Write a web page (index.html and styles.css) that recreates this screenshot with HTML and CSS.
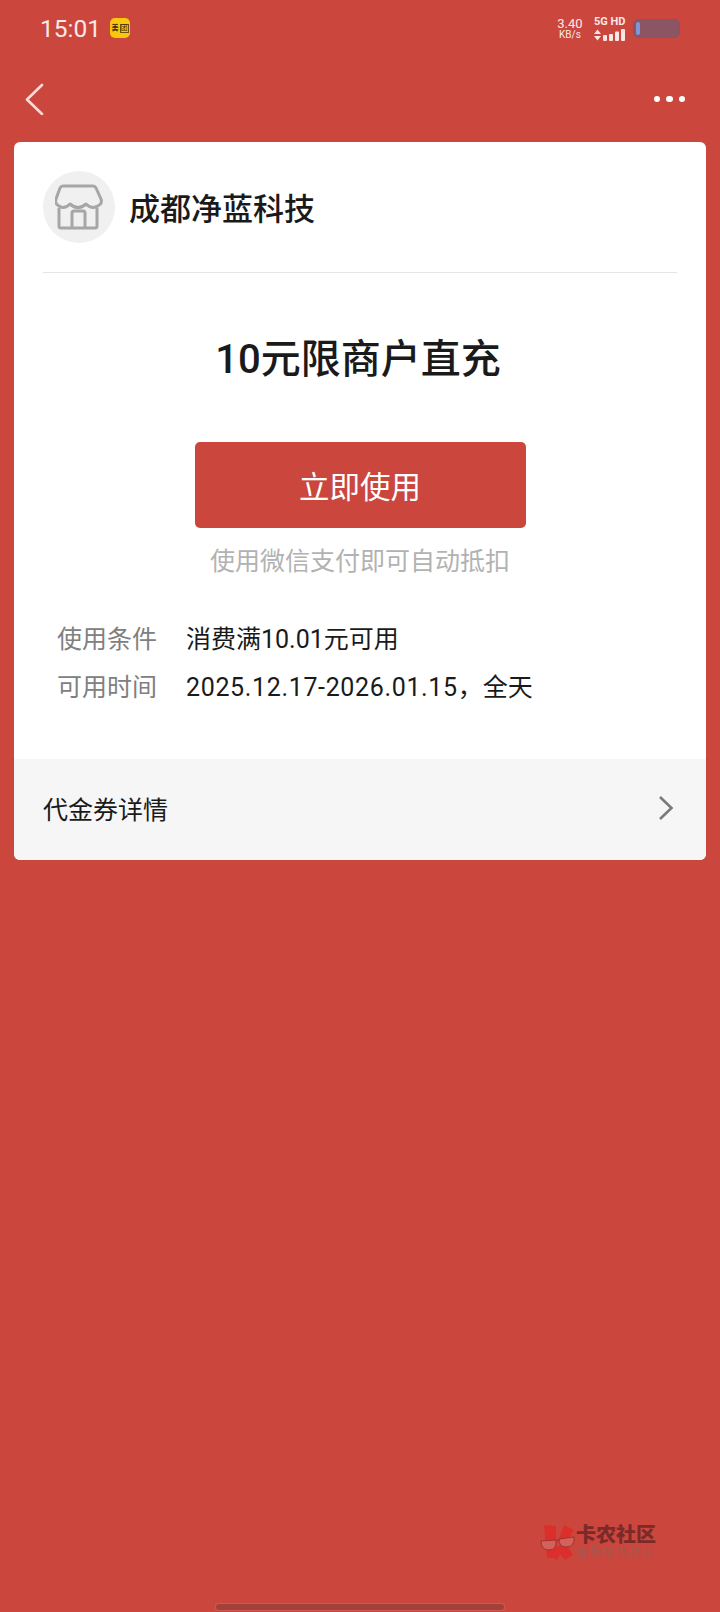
FILE: index.html
```html
<!DOCTYPE html>
<html lang="zh-CN">
<head>
  <meta charset="UTF-8">
  <meta name="viewport" content="width=device-width, initial-scale=1.0">
  <title>代金券</title>
  <link rel="stylesheet" href="styles.css">
</head>
<body>
  <!-- Phone status bar -->
  <div class="status-bar">
    <div class="status-left">
      <span class="clock">15:01</span>
      <span class="app-badge"><span>美</span><span class="app-badge-box">团</span></span>
    </div>
    <div class="status-right">
      <div class="net-speed">
        <span class="speed-value">3.40</span>
        <span class="speed-unit">KB/s</span>
      </div>
      <div class="net-signal">
        <span class="net-type">5G HD</span>
        <svg class="signal" width="32" height="12" viewBox="0 0 32 12">
          <path d="M3.500 0.500 L7 5 H0 Z M3.500 11.500 L7 7 H0 Z" fill="#fbe6e3"/>
          <rect x="9" y="6" width="4" height="6" rx="1" fill="#fbe6e3"/>
          <rect x="15" y="5" width="4" height="7" rx="1" fill="#fbe6e3"/>
          <rect x="21" y="2.500" width="4" height="9.500" rx="1" fill="#fbe6e3"/>
          <rect x="27" y="0" width="4" height="12" rx="1" fill="#fbe6e3"/>
        </svg>
      </div>
      <div class="battery"><span class="battery-level"></span></div>
    </div>
  </div>

  <!-- Top navigation -->
  <div class="nav">
    <svg class="nav-back" width="20" height="32" viewBox="0 0 20 32">
      <path d="M18 2 L3 16.500 L18 31" fill="none" stroke="#fbdcd8" stroke-width="2.600" stroke-linecap="round" stroke-linejoin="round"/>
    </svg>
    <div class="nav-more"><span></span><span></span><span></span></div>
  </div>

  <!-- Voucher card -->
  <div class="card">
    <div class="card-body">
      <div class="merchant">
        <div class="merchant-logo">
          <svg width="48" height="46" viewBox="0 0 48 46">
            <path d="M8 2 H38 Q40 2 41 4 L46 15 Q47 18 45.500 20 Q38 27 31 20 Q23 27 15 20 Q8 27 1.500 20 Q0 18 1 15 L5 4 Q6 2 8 2 Z" fill="none" stroke="#a6a6a6" stroke-width="3" stroke-linejoin="round"/>
            <path d="M4 24 V42 Q4 44 6 44 H40 Q42 44 42 42 V24" fill="none" stroke="#a6a6a6" stroke-width="3" stroke-linejoin="round"/>
            <path d="M17 44 V29 Q17 27 19 27 H28 Q30 27 30 29 V44" fill="none" stroke="#a6a6a6" stroke-width="3" stroke-linejoin="round"/>
          </svg>
        </div>
        <span class="merchant-name">成都净蓝科技</span>
      </div>

      <h1 class="voucher-title">10元限商户直充</h1>

      <button class="use-btn">立即使用</button>
      <p class="use-hint">使用微信支付即可自动抵扣</p>

      <div class="info-row">
        <span class="info-label">使用条件</span>
        <span class="info-value">消费满10.01元可用</span>
      </div>
      <div class="info-row">
        <span class="info-label">可用时间</span>
        <span class="info-value"><span class="info-date">2025.12.17-2026.01.15</span>，全天</span>
      </div>
    </div>

    <div class="detail-link">
      <span>代金券详情</span>
      <svg width="16" height="26" viewBox="0 0 16 26">
        <path d="M2 2 L13.500 13 L2 24" fill="none" stroke="#7a7a7a" stroke-width="2.600"/>
      </svg>
    </div>
  </div>

  <!-- Site watermark in the lower corner -->
  <div class="watermark">
    <svg width="36" height="36" viewBox="0 0 36 36">
      <path d="M4 1 L16 2 V34 L7 34 Z" fill="#dc2f2b"/>
      <path d="M19 14 L24 1 L34 6 L27 17 Z" fill="#dc2f2b"/>
      <path d="M15 23 L26 20 L33 31 L25 36 L20 30 L17 36 H15 Z" fill="#dc2f2b"/>
      <path d="M1 17 L16 16 Q17 26 9 26 Q1 26 1 17 Z" fill="#d5615a" stroke="#8a2f2b" stroke-width="0.800"/>
      <path d="M19 15 L34 13 Q35 23 26 23 Q19 23 19 15 Z" fill="#d5615a" stroke="#8a2f2b" stroke-width="0.800"/>
      <path d="M16 16.500 L19 15.500" fill="none" stroke="#8a2f2b" stroke-width="0.800"/>
    </svg>
    <div class="watermark-text">
      <span class="watermark-name">卡农社区</span>
      <span class="watermark-sub">金融在线教育</span>
    </div>
  </div>

  <div class="home-bar"></div>
</body>
</html>
```

FILE: styles.css
```css
/* Page base */
* {
  box-sizing: border-box;
}

body {
  position: relative;
  height: 1612px;
  margin: 0;
  overflow: hidden;
  font-family: Roboto, "Noto Sans CJK SC", sans-serif;
  background-color: #cb463d;
  color: #1a1a1a;
}

/* Status bar */
.status-bar {
  display: flex;
  justify-content: space-between;
  align-items: center;
  height: 56px;
  padding: 0 40px 0 40px;
  color: #fbe9e7;
}

.status-left {
  display: flex;
  align-items: center;
  gap: 9px;
}

.clock {
  font-size: 24.5px;
}

.app-badge {
  display: flex;
  justify-content: center;
  align-items: center;
  gap: 1px;
  width: 20px;
  height: 20px;
  border-radius: 5px;
  background-color: #fcc60e;
  color: #3a2c00;
  font-size: 7px;
  font-weight: 700;
  line-height: 1;
}

.app-badge-box {
  border: 1px solid #6b5510;
  font-weight: 400;
}

.status-right {
  display: flex;
  align-items: center;
}

.net-speed {
  display: flex;
  flex-direction: column;
  align-items: center;
  width: 26px;
  margin-right: 11px;
  line-height: 1;
}

.speed-value {
  font-size: 13px;
}

.speed-unit {
  font-size: 10px;
}

.net-signal {
  display: flex;
  flex-direction: column;
  width: 33px;
  margin-right: 6px;
}

.net-type {
  font-size: 11px;
  font-weight: 700;
  line-height: 12px;
  white-space: nowrap;
}

.signal {
  display: block;
  margin-top: 1px;
}

.battery {
  display: flex;
  width: 47px;
  height: 19px;
  padding: 2px;
  border-radius: 6px;
  background-color: #8b5566;
  border: 1px solid #7a5a6a;
}

.battery-level {
  width: 4px;
  border-radius: 2px;
  background-color: #7f97d6;
}

/* Navigation */
.nav {
  display: flex;
  justify-content: space-between;
  align-items: center;
  height: 86px;
  padding: 0 35px 0 24px;
}

.nav-more {
  display: flex;
  gap: 6px;
}

.nav-more span {
  width: 6.5px;
  height: 6.5px;
  border-radius: 50%;
  background-color: #ffffff;
}

/* Card */
.card {
  margin: 0 14px;
  border-radius: 6px;
  overflow: hidden;
  background-color: #ffffff;
}

.card-body {
  height: 617px;
  padding: 0 29px;
}

.merchant {
  display: flex;
  align-items: center;
  gap: 14px;
  height: 131px;
  border-bottom: 1px solid #e5e5e5;
}

.merchant-logo {
  display: flex;
  justify-content: center;
  align-items: center;
  width: 72px;
  height: 72px;
  border-radius: 50%;
  background-color: #f0f0f0;
}

.merchant-name {
  padding-bottom: 2px;
  font-size: 31px;
  font-weight: 500;
}

.voucher-title {
  margin: 57px 0 0;
  padding-right: 4px;
  font-size: 40px;
  font-weight: 500;
  line-height: 60px;
  text-align: center;
}

.use-btn {
  display: block;
  width: 331px;
  height: 86px;
  margin: 52px auto 0;
  border: none;
  border-radius: 5px;
  background-color: #cb463d;
  color: #ffffff;
  font-family: inherit;
  font-size: 30.5px;
}

.use-hint {
  margin: 15px 0 32px;
  color: #b2b2b2;
  font-size: 25px;
  line-height: 38px;
  text-align: center;
}

.info-row {
  display: flex;
  align-items: center;
  gap: 29px;
  height: 48px;
  padding-left: 14px;
  font-size: 25px;
}

.info-label {
  color: #808080;
}

.info-value {
  color: #1a1a1a;
}

.info-date {
  letter-spacing: 0.65px;
}

/* Detail link */
.detail-link {
  display: flex;
  justify-content: space-between;
  align-items: center;
  height: 101px;
  padding: 0 32px 3px 29px;
  background-color: #f6f6f6;
  font-size: 25px;
}

/* Overlays */
.watermark {
  position: absolute;
  left: 540px;
  top: 1524px;
  display: flex;
}

.watermark-text {
  display: flex;
  flex-direction: column;
  align-items: center;
}

.watermark-name {
  color: #7a2a28;
  font-size: 20px;
  font-weight: 900;
  line-height: 22px;
}

.watermark-sub {
  color: #a9564e;
  font-size: 11px;
  letter-spacing: 2px;
  line-height: 14px;
}

.home-bar {
  position: absolute;
  left: 216px;
  bottom: 2px;
  width: 288px;
  height: 6px;
  border-radius: 3px;
  background-color: #a0423a;
  box-shadow: 0 0 0 1px rgba(255, 255, 255, 0.1);
}
```
